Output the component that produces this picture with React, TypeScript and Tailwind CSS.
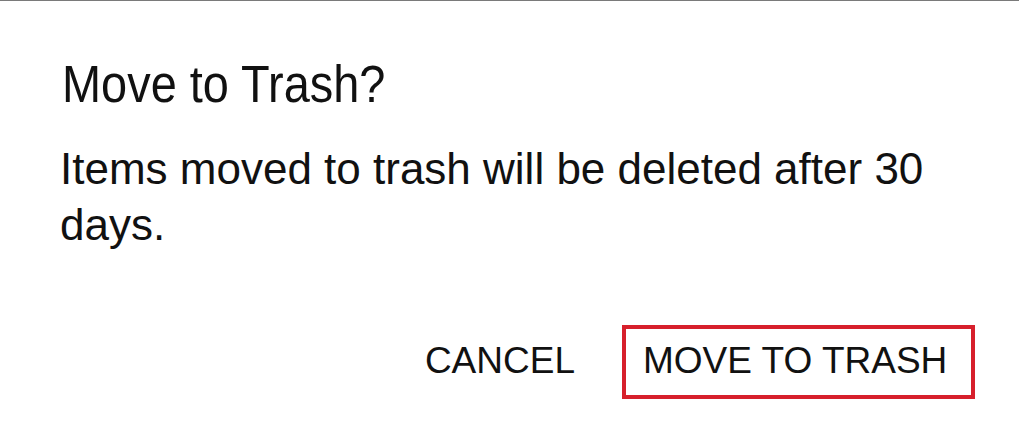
const App = () => {
  return (
    <div className="w-[1019px] h-[446px] bg-white flex flex-col text-[#111] font-['Liberation_Sans',Arial,sans-serif] overflow-hidden">
      {/* edge of the sheet above */}
      <div className="h-px bg-[#7a7a7a]" />

      {/* Dialog title */}
      <div className="mt-[58px] pl-[62px]">
        <h2 className="text-[51px] leading-none font-normal origin-left scale-x-[0.92]">Move to Trash?</h2>
      </div>

      {/* Message */}
      <p className="mt-[31px] pl-[60px] w-[940px] text-[44px] leading-[56px]">
        Items moved to trash will be deleted after 30 days.
      </p>

      {/* Actions */}
      <div className="mt-[72px] flex items-center justify-end pr-[44px]">
        <button className="mr-[47px] text-[37px] leading-none pb-[3px]">CANCEL</button>
        <button className="w-[353px] h-[74px] flex items-center pl-[17px] pb-[3px] border-4 border-[#d7202c] text-[37px] leading-none">
          MOVE TO TRASH
        </button>
      </div>
    </div>
  );
};

export default App;
